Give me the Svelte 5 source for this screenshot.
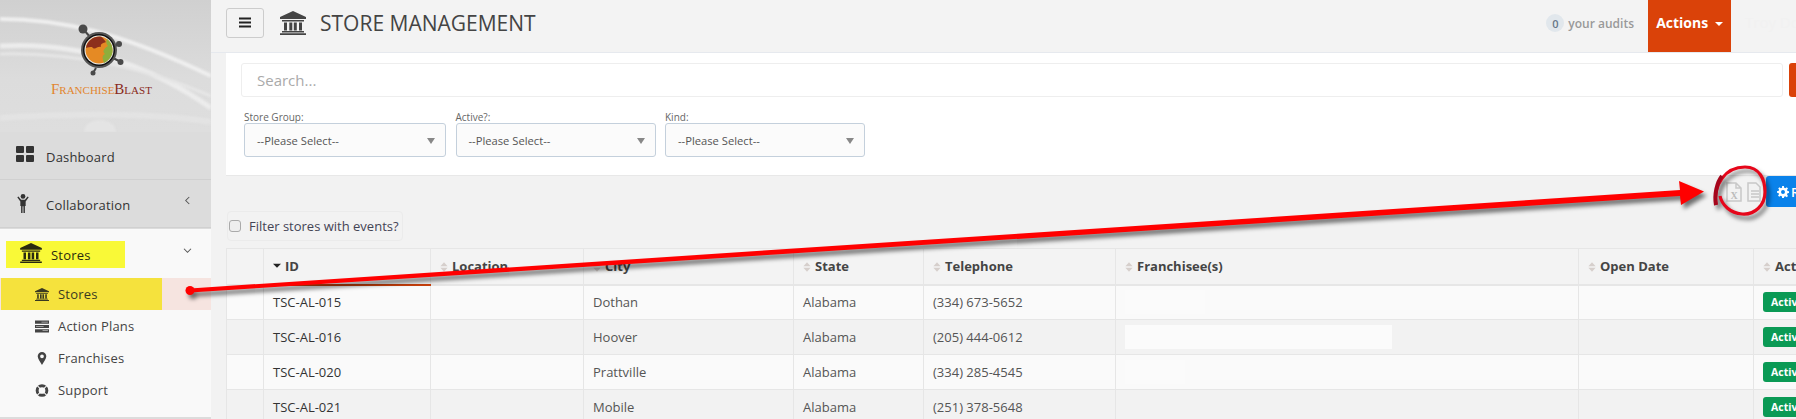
<script>
  const columns = [
    { label: "", width: 37, sort: "none" },
    { label: "ID", width: 167, sort: "desc" },
    { label: "Location", width: 153, sort: "both" },
    { label: "City", width: 210, sort: "both" },
    { label: "State", width: 130, sort: "both" },
    { label: "Telephone", width: 192, sort: "both" },
    { label: "Franchisee(s)", width: 463, sort: "both" },
    { label: "Open Date", width: 175, sort: "both" },
    { label: "Active", width: 90, sort: "both" },
  ];

  const stores = [
    { id: "TSC-AL-015", city: "Dothan", state: "Alabama", phone: "(334) 673-5652", blur: 80 },
    { id: "TSC-AL-016", city: "Hoover", state: "Alabama", phone: "(205) 444-0612", blur: 267 },
    { id: "TSC-AL-020", city: "Prattville", state: "Alabama", phone: "(334) 285-4545", blur: 60 },
    { id: "TSC-AL-021", city: "Mobile", state: "Alabama", phone: "(251) 378-5648", blur: 0 },
  ];

  const filters = ["Store Group:", "Active?:", "Kind:"];
</script>

{#snippet bank(cls)}
  <svg class={cls} viewBox="0 0 26 24" aria-hidden="true">
    <path d="M13 0 26 6v2H0V6zM2 9h22v1.500H2zM4 11.500h3v8H4zM9.300 11.500h3v8h-3zM13.800 11.500h3v8h-3zM19 11.500h3v8h-3zM2 20h22v1.500H2zM0 22.300h26V24H0z" />
  </svg>
{/snippet}

{#snippet sortIcon(kind)}
  {#if kind === "desc"}
    <svg class="sort" viewBox="0 0 10 12"><path d="M0 2h10L5 7z" fill="#222" /></svg>
  {:else if kind === "both"}
    <svg class="sort" viewBox="0 0 10 12"><path d="M5 0l4.500 5H.500zM5 12l4.500-5H.500z" fill="#d6cfcc" /></svg>
  {/if}
{/snippet}

<div class="page">
  <aside class="sidebar">
    <div class="brand">
      <svg class="waves" viewBox="0 0 211 132" preserveAspectRatio="none" aria-hidden="true">
        <path d="M0 19C60 19 120 32 211 76" stroke="#efefef" stroke-width="4" fill="none" />
        <path d="M0 46C70 42 140 58 211 108" stroke="#ececec" stroke-width="5" fill="none" />
        <path d="M0 54C80 52 150 70 211 96" stroke="#e6e6e6" stroke-width="3" fill="none" />
        <path d="M0 118C60 114 150 112 211 122" stroke="#e3e3e3" stroke-width="6" fill="none" />
        <ellipse cx="100" cy="132" rx="16" ry="12" fill="#e4e4e4" />
      </svg>
      <svg class="logo" viewBox="0 0 50 60" aria-hidden="true">
        <g stroke="#444" stroke-width="2">
          <path d="M8 7l8 9M36 26l8-4M38 36l8 4M21 46l-3 5" />
        </g>
        <circle cx="8" cy="7" r="4.500" fill="#4a4a4a" />
        <circle cx="44" cy="22" r="3" fill="#4a4a4a" />
        <circle cx="45.500" cy="40" r="3" fill="#4a4a4a" />
        <circle cx="18" cy="51" r="2.500" fill="#4a4a4a" />
        <circle cx="24" cy="28" r="18" fill="#555" />
        <circle cx="24" cy="28" r="16" fill="#111" />
        <circle cx="24" cy="28" r="14.500" fill="#eee" />
        <circle cx="24" cy="28" r="13.500" fill="#e58a24" />
        <path d="M11 26C12 19 18 14.500 25 14.500C28 15 29 18 31 20C28 21 25 22 26 25C22 24 20 29 17 25C15 25 13 25 11 26z" fill="#8c2f1c" />
        <path d="M32 17C36 20 38 25 37.500 30C37 35 33 39 29 41C28 37 26 34 30 32C26 29 31 25 33 24C31 22 31 20 32 17z" fill="#8eae3c" />
      </svg>
      <div class="wordmark"><span class="franchise">Franchise</span><span class="blast">Blast</span></div>
    </div>

    <a class="nav-main" href="#dashboard">
      <svg class="icon-dash" viewBox="0 0 18 16" aria-hidden="true">
        <path d="M1 0h6a1 1 0 0 1 1 1v5a1 1 0 0 1-1 1H1a1 1 0 0 1-1-1V1a1 1 0 0 1 1-1zM11 0h6a1 1 0 0 1 1 1v5a1 1 0 0 1-1 1h-6a1 1 0 0 1-1-1V1a1 1 0 0 1 1-1zM1 9h6a1 1 0 0 1 1 1v5a1 1 0 0 1-1 1H1a1 1 0 0 1-1-1v-5a1 1 0 0 1 1-1zM11 9h6a1 1 0 0 1 1 1v5a1 1 0 0 1-1 1h-6a1 1 0 0 1-1-1v-5a1 1 0 0 1 1-1z" />
      </svg>
      <span>Dashboard</span>
    </a>
    <a class="nav-main" href="#collab">
      <svg class="icon-child" viewBox="0 0 12 20" aria-hidden="true">
        <circle cx="6" cy="2.500" r="2.500" />
        <path d="M0 3.500 1.200 2.500 4 6h4l2.800-3.500L12 3.500 8.800 8v4.500H8V20H6.500v-7h-1v7H4v-7.500h-.800V8z" />
      </svg>
      <span>Collaboration</span>
      <svg class="chev" viewBox="0 0 8 10" aria-hidden="true"><path d="M6 1 2 5l4 4" /></svg>
    </a>

    <div class="nav-open">
      <div class="nav-parent">
        <span class="mark">
          {@render bank("icon-bank")}
          <span>Stores</span>
        </span>
        <svg class="chev down" viewBox="0 0 10 8" aria-hidden="true"><path d="M1 2l4 4 4-4" /></svg>
      </div>
      <a class="nav-sub current" href="#stores">
        <span class="mark-sub">
          {@render bank("icon-sub")}
          <span>Stores</span>
        </span>
      </a>
      <a class="nav-sub" href="#plans">
        <svg class="icon-sub" viewBox="0 0 26 24" aria-hidden="true">
          <path d="M0 1h26v6H0zM0 9h26v6H0zM0 17h26v6H0z" />
          <path d="M12 3h12v1.500H12zM2 11h14v1.500H2zM14 19h10v1.500H14z" fill="#bbb" />
        </svg>
        <span>Action Plans</span>
      </a>
      <a class="nav-sub" href="#franchises">
        <svg class="icon-sub" viewBox="0 0 26 24" aria-hidden="true">
          <path fill-rule="evenodd" d="M13 0a8 8 0 0 1 8 8c0 5-5 11-8 16-3-5-8-11-8-16a8 8 0 0 1 8-8zm0 4.500a3.500 3.500 0 1 0 0 7 3.500 3.500 0 0 0 0-7z" />
        </svg>
        <span>Franchises</span>
      </a>
      <a class="nav-sub" href="#support">
        <svg class="icon-sub" viewBox="0 0 26 24" aria-hidden="true">
          <circle cx="13" cy="12" r="9" fill="none" stroke="currentColor" stroke-width="5.500" />
          <path d="M4 3l6 6M22 3l-6 6M4 21l6-6M22 21l-6-6" stroke="#f9f9f9" stroke-width="2" />
        </svg>
        <span>Support</span>
      </a>
    </div>
  </aside>

  <main class="main">
    <header class="topbar">
      <button class="burger" aria-label="Toggle menu">
        <svg viewBox="0 0 12 10" aria-hidden="true"><path d="M0 0h12v2H0zM0 4h12v2H0zM0 8h12v2H0z" /></svg>
      </button>
      {@render bank("icon-title")}
      <h1>STORE MANAGEMENT</h1>
      <div class="audits"><span class="count">0</span><span>your audits</span></div>
      <button class="actions">Actions <i class="caret"></i></button>
      <span class="user">Troy Do</span>
    </header>

    <section class="panel">
      <div class="search-row">
        <input class="search" placeholder="Search..." />
        <button class="search-go" aria-label="Search"></button>
      </div>
      <div class="filters">
        {#each filters as f}
          <div class="filter">
            <span class="filter-label">{f}</span>
            <div class="select">--Please Select--<i class="select-caret"></i></div>
          </div>
        {/each}
      </div>
    </section>

    <div class="toolbar">
      <svg class="file" viewBox="0 0 16 20" aria-hidden="true">
        <path d="M1 1h9l5 5v13H1z M10 1v5h5" />
        <text x="8" y="16.500" text-anchor="middle">X</text>
      </svg>
      <svg class="file second" viewBox="0 0 14 20" aria-hidden="true">
        <path d="M1 1h8l4 4v14H1z M4 9h8M4 12h8M4 15h8" />
      </svg>
      <button class="refresh">
        <svg viewBox="0 0 14 14" aria-hidden="true">
          <path fill-rule="evenodd" d="M6 0h2l.400 2 1.300.500L11.400 1.400l1.400 1.400-1.100 1.700.500 1.300 2 .400v2l-2 .400-.500 1.300 1.100 1.700-1.400 1.400-1.700-1.100-1.300.500L8 14H6l-.400-2-1.300-.500-1.700 1.100-1.400-1.400 1.100-1.700-.500-1.300L0 8V6l2-.400.500-1.300L1.400 2.800l1.400-1.400 1.700 1.100 1.300-.500zM7 4.700a2.300 2.300 0 1 0 0 4.600 2.300 2.300 0 0 0 0-4.600z" />
        </svg>
        Refresh
      </button>
    </div>

    <label class="events"><input type="checkbox" />Filter stores with events?</label>

    <table>
      <colgroup>
        {#each columns as c}<col style="width: {c.width}px" />{/each}
      </colgroup>
      <thead>
        <tr>
          {#each columns as c}
            <th class:sorted={c.sort === "desc"}>
              {@render sortIcon(c.sort)}{c.label}
            </th>
          {/each}
        </tr>
      </thead>
      <tbody>
        {#each stores as s}
          <tr>
            <td></td>
            <td class="id">{s.id}</td>
            <td></td>
            <td>{s.city}</td>
            <td>{s.state}</td>
            <td>{s.phone}</td>
            <td>{#if s.blur}<div class="redacted" style="width: {s.blur}px"></div>{/if}</td>
            <td></td>
            <td><span class="badge">Active</span></td>
          </tr>
        {/each}
      </tbody>
    </table>
  </main>

  <svg class="annotation" viewBox="0 0 1796 419" aria-hidden="true">
    <g class="shadowed">
      <path d="M1716 205C1713 185 1725 167 1745 167C1760 167 1765 180 1765 192C1765 205 1755 215 1742 214C1730 213 1722 205 1720 196" fill="none" stroke="#e6061a" stroke-width="3.200" />
      <path d="M1716 205C1714 195 1717 182 1722 176" fill="none" stroke="#a5061c" stroke-width="4" />
    </g>
    <g class="shadowed">
      <circle cx="190" cy="290.500" r="4.500" fill="#f00" />
      <path d="M190 288.500 1680 190 1679 181 1704 191.500 1681 205 1680 196 190 292.500z" fill="#f00" />
    </g>
  </svg>
</div>

<style>
  :global(body) {
    background: #f2f2f2;
  }

  .page {
    position: relative;
    display: flex;
    width: 1796px;
    height: 419px;
    overflow: hidden;
    font-family: "Open Sans", "Liberation Sans", sans-serif;
    font-size: 13px;
    color: #444;
  }

  a {
    color: inherit;
    text-decoration: none;
  }

  svg {
    fill: currentColor;
    flex: none;
  }

  /* sidebar */
  .sidebar {
    flex: 0 0 211px;
    background: #dcdcdc;
    color: #333;
    font-weight: 500;
    letter-spacing: 0.2px;
  }

  .brand {
    position: relative;
    height: 132px;
    background: linear-gradient(#d0d0d0, #dcdcdc 60%, #dedede);
    overflow: hidden;
  }

  .waves {
    position: absolute;
    inset: 0;
    width: 100%;
    height: 100%;
    filter: blur(1px);
  }

  .logo {
    position: absolute;
    left: 75px;
    top: 22px;
    width: 50px;
    height: 60px;
  }

  .wordmark {
    position: absolute;
    left: 51px;
    top: 80px;
    font-family: "Liberation Serif", serif;
    font-variant: small-caps;
    font-size: 15px;
    font-weight: 400;
    letter-spacing: 0;
    line-height: 18px;
  }

  .franchise {
    color: #e2852e;
  }

  .blast {
    color: #8a2a20;
  }

  .nav-main {
    display: flex;
    align-items: center;
    gap: 12px;
    height: 48px;
    padding: 2px 16px 0;
    box-sizing: border-box;
    border-bottom: 1px solid #d0d0d0;
    position: relative;
  }

  .icon-dash {
    width: 18px;
    height: 16px;
    margin-top: -5px;
  }

  .icon-child {
    width: 12px;
    height: 19px;
    margin: -3px 5px 0 1px;
  }

  .chev {
    position: absolute;
    right: 20px;
    top: 16px;
    width: 7px;
    height: 9px;
    fill: none;
    stroke: #555;
    stroke-width: 1.200;
  }

  .chev.down {
    top: 18px;
    width: 9px;
    height: 7px;
    right: 19px;
  }

  .nav-open {
    background: #f9f9f9;
    height: 188px;
    margin-top: 1px;
  }

  .nav-parent {
    position: relative;
    height: 49px;
    padding: 12px 0 0 6px;
    box-sizing: border-box;
  }

  .mark {
    display: flex;
    align-items: center;
    gap: 9px;
    width: 105px;
    height: 27px;
    padding-left: 14px;
    background: #f9f937;
    color: #2a2a10;
  }

  .icon-bank {
    width: 22px;
    height: 20px;
    margin-top: -3px;
  }

  .nav-sub {
    display: flex;
    align-items: center;
    gap: 9px;
    height: 32px;
    padding-left: 35px;
    color: #444;
  }

  .nav-sub.current {
    background: #f6e4e0;
    padding-left: 1px;
  }

  .mark-sub {
    display: flex;
    align-items: center;
    gap: 9px;
    width: 127px;
    height: 100%;
    padding-left: 34px;
    background: #f5e23d;
    color: #3a3a20;
  }

  .icon-sub {
    width: 14px;
    height: 13px;
  }

  /* top bar */
  .main {
    flex: 1;
    min-width: 0;
    padding-left: 15px;
  }

  .topbar {
    display: flex;
    align-items: center;
    height: 52px;
    margin-left: -15px;
    padding-left: 15px;
    border-bottom: 1px solid #e6e9ee;
    background: #f3f3f3;
  }

  .burger {
    display: grid;
    place-items: center;
    width: 38px;
    height: 30px;
    margin-top: -7px;
    padding: 0;
    border: 1px solid #ccc;
    border-radius: 3px;
    background: #f3f3f3;
    color: #222;
  }

  .burger svg {
    width: 12px;
    height: 11px;
  }

  .icon-title {
    width: 26px;
    height: 24px;
    margin: -7px 14px 0 16px;
    color: #444;
  }

  h1 {
    margin: -7px 0 0;
    font-size: 21px;
    font-weight: 400;
    color: #444;
    white-space: nowrap;
  }

  .audits {
    display: flex;
    align-items: center;
    gap: 4px;
    margin-left: auto;
    margin-right: 14px;
    margin-top: -6px;
    color: #999;
    font-size: 12px;
    font-weight: 600;
  }

  .count {
    display: grid;
    place-items: center;
    width: 18px;
    height: 18px;
    border-radius: 50%;
    background: #e1e7ec;
    color: #678;
    font-size: 11px;
  }

  .actions {
    width: 83px;
    height: 52px;
    padding: 0 0 8px;
    border: 0;
    background: #da4209;
    color: #fff;
    font: 700 14px "Open Sans", sans-serif;
  }

  .user {
    width: 65px;
    padding: 0 0 8px 14px;
    box-sizing: border-box;
    color: #f1f1f1;
    font-size: 15px;
    white-space: nowrap;
    overflow: hidden;
  }

  .caret {
    display: inline-block;
    margin-left: 3px;
    border: 4px solid transparent;
    border-top-color: #fff;
    border-bottom: 0;
    vertical-align: middle;
  }

  /* filter panel */
  .panel {
    height: 123px;
    padding: 10px 0 0 15px;
    box-sizing: border-box;
    background: #fff;
    border-bottom: 1px solid #e8e8e8;
  }

  .search-row {
    display: flex;
    gap: 6px;
    height: 34px;
  }

  .search {
    flex: 1;
    min-width: 0;
    padding: 0 15px;
    border: 1px solid #eee;
    border-radius: 3px;
    outline: none;
    font: 15px "Open Sans", sans-serif;
  }

  .search::placeholder {
    color: #aaa;
  }

  .search-go {
    flex: 0 0 7px;
    border: 0;
    padding: 0;
    border-radius: 3px 0 0 3px;
    background: #da4209;
  }

  .filters {
    display: grid;
    grid-template-columns: 202px 200px 200px;
    column-gap: 9.500px;
    margin: 14px 0 0 3px;
  }

  .filter-label {
    display: block;
    height: 12px;
    font-size: 10px;
    line-height: 13px;
    color: #666;
  }

  .select {
    position: relative;
    height: 34px;
    padding-left: 12px;
    box-sizing: border-box;
    border: 1px solid #c4d0dc;
    border-radius: 3px;
    background: #fbfbfb;
    font-size: 11.200px;
    line-height: 33px;
    color: #555;
  }

  .select-caret {
    position: absolute;
    right: 10px;
    top: 14px;
    border: 4px solid transparent;
    border-top: 6px solid #888;
    border-bottom: 0;
  }

  /* toolbar above the table */
  .toolbar {
    display: flex;
    align-items: flex-start;
    height: 35px;
    margin-right: -60px;
    justify-content: flex-end;
  }

  .file {
    width: 16px;
    height: 20px;
    margin: 6px 0 0;
    fill: none;
    stroke: #c8c8c8;
    stroke-width: 1.500;
  }

  .file text {
    fill: #bbb;
    stroke: none;
    font: 700 10px "Liberation Serif", serif;
  }

  .file.second {
    width: 14px;
    margin: 6px 5px 0 5px;
  }

  .refresh {
    display: flex;
    align-items: center;
    gap: 2px;
    width: 90px;
    height: 31px;
    padding: 0 0 0 11px;
    border: 0;
    border-radius: 3px;
    background: #0a82ea;
    color: #fff;
    font: 600 13px "Open Sans", sans-serif;
  }

  .refresh svg {
    width: 12px;
    height: 12px;
  }

  .events {
    display: flex;
    align-items: center;
    gap: 8px;
    width: 176px;
    height: 30px;
    margin-left: 1px;
    padding-left: 1px;
    box-sizing: border-box;
    border: 1px solid #ebebeb;
    border-radius: 4px;
    color: #445;
  }

  .events input {
    appearance: none;
    width: 12px;
    height: 12px;
    margin: 0;
    border: 1px solid #aaa;
    border-radius: 3px;
    background: #eee;
  }

  /* table */
  table {
    margin-top: 7px;
    width: 1617px;
    table-layout: fixed;
    border-collapse: collapse;
    color: #555;
  }

  th,
  td {
    height: 35px;
    padding: 0 9px;
    box-sizing: border-box;
    border: 1px solid #e6e6e6;
    text-align: left;
    white-space: nowrap;
    overflow: hidden;
  }

  th {
    height: 36px;
    font-weight: 700;
    color: #444;
    background: #f3f3f3;
    border-bottom-width: 2px;
  }

  th.sorted {
    border-bottom: 2px solid #c8400c;
  }

  .sort {
    display: inline-block;
    width: 8px;
    height: 10px;
    margin-right: 4px;
    vertical-align: -1px;
  }

  tbody tr:nth-child(odd) td {
    background: #fafafa;
  }

  tbody tr:nth-child(even) td {
    background: #f2f2f2;
  }

  td.id {
    color: #333;
  }

  .redacted {
    height: 24px;
    background: #fbfbfb;
  }

  .badge {
    display: inline-block;
    height: 20px;
    padding: 0 8px;
    border-radius: 3px;
    background: #0b9a55;
    color: #fff;
    font-size: 10.500px;
    font-weight: 700;
    line-height: 20px;
  }

  /* hand-drawn annotation on top of the screenshot */
  .annotation {
    position: absolute;
    inset: 0;
    width: 1796px;
    height: 419px;
    pointer-events: none;
  }

  .shadowed {
    filter: drop-shadow(3px 4px 2px rgba(0, 0, 0, 0.55));
  }
</style>
